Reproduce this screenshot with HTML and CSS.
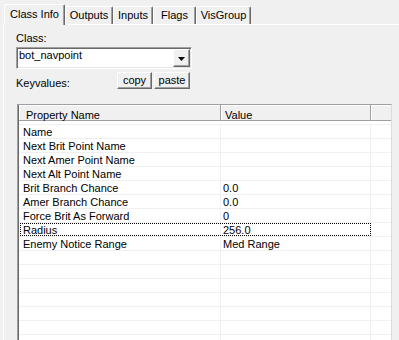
FILE: index.html
```html
<!DOCTYPE html>
<html>
<head>
<meta charset="utf-8">
<title>Class Info</title>
<link rel="stylesheet" href="styles.css">
</head>
<body>
<div class="tabs">
  <div class="tab active t1">Class Info</div>
  <div class="tab t2">Outputs</div>
  <div class="tab t3">Inputs</div>
  <div class="tab t4">Flags</div>
  <div class="tab t5">VisGroup</div>
</div>
<div class="panel">
  <div class="label">Class:</div>
  <div class="combo">
    <span class="combo-text">bot_navpoint</span>
    <span class="drop"><svg width="7" height="4" viewBox="0 0 7 4"><polygon points="0,0 7,0 3.5,4" fill="#000"/></svg></span>
  </div>
  <div class="kv-row">
    <span class="kv-label">Keyvalues:</span>
    <div class="btns">
      <button class="btn copy">copy</button>
      <button class="btn paste">paste</button>
    </div>
  </div>
  <div class="list">
    <div class="list-inner">
      <div class="hdr">
        <div class="hc c1">Property Name</div>
        <div class="hc c2">Value</div>
        <div class="hc c3"></div>
      </div>
      <div class="rows">
        <div class="row"><div class="cell c1">Name</div><div class="cell c2"></div><div class="cell c3"></div></div>
        <div class="row"><div class="cell c1">Next Brit Point Name</div><div class="cell c2"></div><div class="cell c3"></div></div>
        <div class="row"><div class="cell c1">Next Amer Point Name</div><div class="cell c2"></div><div class="cell c3"></div></div>
        <div class="row"><div class="cell c1">Next Alt Point Name</div><div class="cell c2"></div><div class="cell c3"></div></div>
        <div class="row"><div class="cell c1">Brit Branch Chance</div><div class="cell c2">0.0</div><div class="cell c3"></div></div>
        <div class="row"><div class="cell c1">Amer Branch Chance</div><div class="cell c2">0.0</div><div class="cell c3"></div></div>
        <div class="row"><div class="cell c1">Force Brit As Forward</div><div class="cell c2">0</div><div class="cell c3"></div></div>
        <div class="row focus"><div class="cell c1">Radius</div><div class="cell c2">256.0</div><div class="cell c3"></div></div>
        <div class="row"><div class="cell c1">Enemy Notice Range</div><div class="cell c2">Med Range</div><div class="cell c3"></div></div>
        <div class="row"><div class="cell c1"></div><div class="cell c2"></div><div class="cell c3"></div></div>
        <div class="row"><div class="cell c1"></div><div class="cell c2"></div><div class="cell c3"></div></div>
        <div class="row"><div class="cell c1"></div><div class="cell c2"></div><div class="cell c3"></div></div>
        <div class="row"><div class="cell c1"></div><div class="cell c2"></div><div class="cell c3"></div></div>
        <div class="row"><div class="cell c1"></div><div class="cell c2"></div><div class="cell c3"></div></div>
        <div class="row"><div class="cell c1"></div><div class="cell c2"></div><div class="cell c3"></div></div>
        <div class="row"><div class="cell c1"></div><div class="cell c2"></div><div class="cell c3"></div></div>
      </div>
    </div>
  </div>
</div>
</body>
</html>
```
FILE: styles.css
```css
html, body {
  margin: 0;
  padding: 0;
}
body {
  background: #f0f0f0;
  font-family: "Liberation Sans", Arial, sans-serif;
  font-size: 11px;
  line-height: 13px;
  color: #000;
  width: 399px;
  height: 340px;
  overflow: hidden;
}

/* Tabs */
.tabs {
  display: flex;
  align-items: flex-end;
  height: 20px;
  padding: 4px 0 0 4px;
}
.tab {
  box-sizing: border-box;
  height: 18px;
  flex: none;
  background: #f0f0f0;
  border-top: 1px solid #fff;
  border-left: 1px solid #fff;
  border-right: 1px solid #696969;
  box-shadow: inset -1px 0 #a0a0a0;
  border-radius: 2px 2px 0 0;
  text-align: center;
  padding-top: 2px;
  white-space: nowrap;
}
.tab.active {
  height: 21px;
  margin-bottom: -1px;
  padding-top: 3px;
  position: relative;
  z-index: 1;
}
.t1 { width: 61px; }
.t2 { width: 48px; }
.t3 { width: 40px; }
.t4 { width: 43px; }
.t5 { width: 55px; }

/* Panel */
.panel {
  margin-left: 3px;
  border-top: 1px solid #fff;
  border-left: 1px solid #fff;
  padding: 7px 0 0 12px;
  height: 308px;
  overflow: hidden;
}
.label {
  height: 13px;
}

/* Combo box */
.combo {
  box-sizing: border-box;
  margin-top: 2px;
  width: 176px;
  height: 22px;
  padding: 1px;
  background: #fff;
  border: 1px solid;
  border-color: #a0a0a0 #fff #fff #a0a0a0;
  box-shadow: inset 1px 1px #696969, inset -1px -1px #e3e3e3;
  display: flex;
  align-items: flex-start;
}
.combo-text {
  padding-left: 1px;
}
.drop {
  box-sizing: border-box;
  margin-left: auto;
  width: 17px;
  height: 18px;
  background: #f0f0f0;
  border: 1px solid;
  border-color: #fff #696969 #696969 #fff;
  box-shadow: inset -1px -1px #a0a0a0;
  display: flex;
  align-items: center;
  justify-content: center;
}
.drop svg {
  display: block;
  margin: 1px 1px 0 0;
}

/* Keyvalues row */
.kv-row {
  margin-top: 3px;
  width: 174px;
  height: 17px;
  display: flex;
  justify-content: space-between;
  align-items: flex-start;
}
.kv-label {
  margin-top: 5px;
}
.btns {
  display: flex;
  gap: 2px;
}
.btn {
  box-sizing: border-box;
  height: 17px;
  padding: 0;
  margin: 0;
  font: inherit;
  color: #000;
  background: #f0f0f0;
  border: 1px solid;
  border-color: #fff #696969 #696969 #fff;
  box-shadow: inset -1px -1px #a0a0a0;
  border-radius: 0;
  line-height: 13px;
}
.copy { width: 35px; }
.paste { width: 36px; }

/* List */
.list {
  margin-top: 15px;
  margin-left: 1px;
  width: 375px;
  height: 236px;
  overflow: hidden;
  box-sizing: border-box;
  background: #fff;
  border-top: 1px solid #a0a0a0;
  border-left: 1px solid #a0a0a0;
  border-right: 1px solid #dcdcdc;
}
.list-inner {
  border-left: 1px solid #696969;
  height: 100%;
}
.hdr {
  display: flex;
}
.hc {
  box-sizing: border-box;
  flex: none;
  height: 16px;
  padding-top: 4px;
  background: #f0f0f0;
  border-right: 1px solid #a0a0a0;
  border-bottom: 1px solid #a0a0a0;
  box-shadow: inset 1px 1px #fff;
  white-space: nowrap;
}
.hc.c1 { width: 202px; padding-left: 7px; }
.hc.c2 { width: 150px; padding-left: 4px; }
.hc.c3 { width: 20px; border-right: none; }

.rows {
  padding-top: 3px;
}
.row {
  display: flex;
  border-bottom: 1px solid #f0f0f0;
}
.row:first-child {
  border-top: 1px solid #f0f0f0;
}
.cell {
  box-sizing: border-box;
  flex: none;
  height: 13px;
  padding-top: 1px;
  line-height: 12px;
  white-space: nowrap;
}
.cell.c1 { width: 202px; padding-left: 4px; border-right: 1px solid #f0f0f0; }
.cell.c2 { width: 150px; padding-left: 2px; border-right: 1px solid #f0f0f0; }
.cell.c3 { width: 20px; }

.row.focus {
  position: relative;
}
.row.focus::after {
  content: "";
  position: absolute;
  left: 1px;
  top: 0;
  width: 351px;
  height: 13px;
  box-sizing: border-box;
  border: 1px dotted #000;
}
```
